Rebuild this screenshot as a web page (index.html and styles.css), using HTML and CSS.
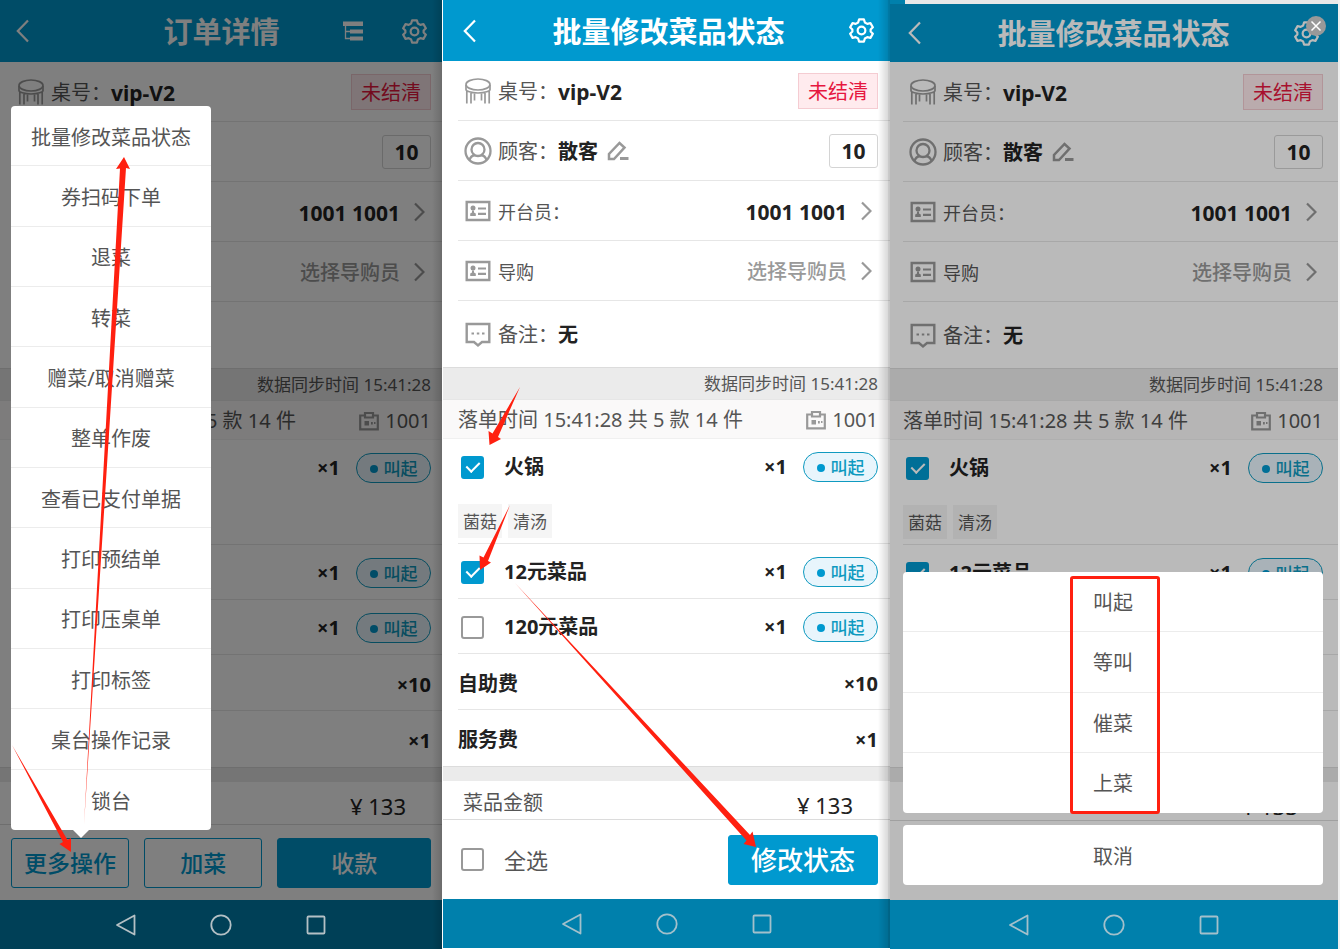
FILE: index.html
```html
<!DOCTYPE html>
<html lang="zh-CN">
<head>
    <meta charset="UTF-8">
    <meta name="viewport" content="width=device-width, initial-scale=1.0">
    <title>批量修改菜品状态</title>
    <link rel="stylesheet" href="styles.css">
</head>
<body>
    <!-- shared icons -->
    <svg class="sprite" aria-hidden="true">
        <symbol id="i-back" viewBox="0 0 13 24"><path d="M12 1.500 1.800 12 12 22.500" fill="none" stroke="currentColor" stroke-width="2.200"/></symbol>
        <symbol id="i-next" viewBox="0 0 11 20"><path d="M1 1.500l8.500 8.500L1 18.500" fill="none" stroke="currentColor" stroke-width="2.200"/></symbol>
        <symbol id="i-gear" viewBox="0 0 26 26">
            <path d="M10.500 1.500h5l1 3.200 2.500 1.400 3.300-.8 2.500 4.300-2.300 2.400v2l2.300 2.400-2.500 4.300-3.300-.8-2.500 1.400-1 3.200h-5l-1-3.200L7 19.900l-3.300.8-2.500-4.300L3.500 14v-2L1.200 9.600l2.500-4.300 3.300.8 2.500-1.400z" fill="none" stroke="currentColor" stroke-width="2.300" stroke-linejoin="round"/>
            <circle cx="13" cy="13" r="4" fill="none" stroke="currentColor" stroke-width="2.300"/>
        </symbol>
        <symbol id="i-tree" viewBox="0 0 20 20">
            <path d="M0 .5h20v4.500H0zM7 8.500h13v4H7zM7 15.500h13v4H7z" fill="currentColor"/>
            <path d="M2.500 5v12.500H7M2.500 10.500H7" fill="none" stroke="currentColor" stroke-width="1.300"/>
        </symbol>
        <symbol id="i-stool" viewBox="0 0 28 28">
            <g fill="none" stroke="currentColor" stroke-width="1.700">
                <ellipse cx="14" cy="7.500" rx="12" ry="5.500"/>
                <path d="M2 8v4.500c0 1.500 5 3.500 12 3.500s12-2 12-3.500V8M2.800 14v12.500M7 15.500v11M10.500 16v7.500M17.500 16v7.500M21 15.500v11M25.200 14v12.500"/>
            </g>
        </symbol>
        <symbol id="i-user" viewBox="0 0 28 28">
            <g fill="none" stroke="currentColor" stroke-width="2.300">
                <circle cx="14" cy="14" r="12.500"/>
                <circle cx="14" cy="12.500" r="6.500"/>
                <path d="M5.500 22.800c1-2.800 3-4.300 5.500-4.800M22.500 22.800c-1-2.800-3-4.300-5.500-4.800"/>
            </g>
        </symbol>
        <symbol id="i-card" viewBox="0 0 28 28">
            <path d="M2.700 5h22.600v18H2.700z" fill="none" stroke="currentColor" stroke-width="2.400"/>
            <circle cx="9" cy="11" r="2.500" fill="currentColor"/>
            <path d="M6.200 19v-2.500l1.800-1v-2h2v2l1.800 1V19z" fill="currentColor"/>
            <path d="M14 11.500h8M14 16.800h8" stroke="currentColor" stroke-width="2.200"/>
        </symbol>
        <symbol id="i-note" viewBox="0 0 28 28">
            <path d="M2.700 4h22.600v18H18l-4 3.500L10 22H2.700z" fill="none" stroke="currentColor" stroke-width="2.400"/>
            <path d="M7.500 13.500h2.500M12.800 13.500h2.500M18 13.500h2.500" stroke="currentColor" stroke-width="2.200"/>
        </symbol>
        <symbol id="i-edit" viewBox="0 0 22 20">
            <path d="M2 18v-5L12.500 2l5 4.500L7 18z" fill="none" stroke="currentColor" stroke-width="2.500"/>
            <path d="M13 17.500h8.500" stroke="currentColor" stroke-width="3"/>
        </symbol>
        <symbol id="i-badge" viewBox="0 0 20 20">
            <path d="M6 4.500H1.200v13.800h17.600V4.500H14" fill="none" stroke="currentColor" stroke-width="2.200"/>
            <path d="M6 2h8v4.500H6z" fill="none" stroke="currentColor" stroke-width="2.200"/>
            <path d="M5.500 10h4.500v4.500H5.500zM12 11h1.800v2.500H12zM15 11h1.500v2H15z" fill="currentColor"/>
        </symbol>
        <symbol id="i-tri" viewBox="0 0 22 22"><path d="M19.500 1.500v19L2 11z" fill="none" stroke="currentColor" stroke-width="1.800" stroke-linejoin="round"/></symbol>
        <symbol id="i-circle" viewBox="0 0 22 22"><circle cx="11" cy="11" r="9.700" fill="none" stroke="currentColor" stroke-width="1.800"/></symbol>
        <symbol id="i-square" viewBox="0 0 22 22"><rect x="2.500" y="2.500" width="17" height="17" rx="1" fill="none" stroke="currentColor" stroke-width="1.800"/></symbol>
    </svg>

    <main class="screens">
        <!-- order detail -->
        <section class="phone phone-detail">
            <header class="header">
                <button type="button" class="icon-btn" aria-label="返回"><svg class="back"><use href="#i-back"/></svg></button>
                <h1>订单详情</h1>
                <div class="tools">
                    <button type="button" class="icon-btn" aria-label="列表"><svg class="tree"><use href="#i-tree"/></svg></button>
                    <button type="button" class="icon-btn" aria-label="设置"><svg class="gear"><use href="#i-gear"/></svg></button>
                </div>
            </header>
            <div class="info">
                <div class="row"><svg class="ico"><use href="#i-stool"/></svg><span>桌号：</span><b class="num">vip-V2</b><span class="tag-red">未结清</span></div>
                <div class="row"><button type="button" class="count">10</button></div>
                <div class="row"><b class="num right">1001 1001</b><svg class="next"><use href="#i-next"/></svg></div>
                <div class="row"><span class="right hint">选择导购员</span><svg class="next"><use href="#i-next"/></svg></div>
                <div class="row remark"></div>
            </div>
            <div class="sync">数据同步时间 15:41:28</div>
            <div class="batch"><span>落单时间 15:41:28 共 5 款 14 件</span><span class="staff"><svg><use href="#i-badge"/></svg>1001</span></div>
            <ul class="items">
                <li class="with-tags"><div class="item"><span class="qty">×1</span><span class="pill">叫起</span></div></li>
                <li><div class="item"><span class="qty">×1</span><span class="pill">叫起</span></div></li>
                <li><div class="item"><span class="qty">×1</span><span class="pill">叫起</span></div></li>
                <li class="fee"><div class="item"><span class="qty">×10</span></div></li>
                <li class="fee"><div class="item"><span class="qty">×1</span></div></li>
            </ul>
            <div class="divider"></div>
            <div class="amount"><span class="money">¥ 133</span></div>
            <footer class="footer detail-footer">
                <button type="button" class="btn-line">更多操作</button>
                <button type="button" class="btn-line">加菜</button>
                <button type="button" class="btn-fill">收款</button>
            </footer>
            <nav class="nav">
                <button type="button" class="icon-btn" aria-label="后退"><svg><use href="#i-tri"/></svg></button>
                <button type="button" class="icon-btn" aria-label="主页"><svg><use href="#i-circle"/></svg></button>
                <button type="button" class="icon-btn" aria-label="最近"><svg><use href="#i-square"/></svg></button>
            </nav>
            <div class="mask"></div>
            <ul class="popup">
                <li><button type="button">批量修改菜品状态</button></li>
                <li><button type="button">券扫码下单</button></li>
                <li><button type="button">退菜</button></li>
                <li><button type="button">转菜</button></li>
                <li><button type="button">赠菜/取消赠菜</button></li>
                <li><button type="button">整单作废</button></li>
                <li><button type="button">查看已支付单据</button></li>
                <li><button type="button">打印预结单</button></li>
                <li><button type="button">打印压桌单</button></li>
                <li><button type="button">打印标签</button></li>
                <li><button type="button">桌台操作记录</button></li>
                <li><button type="button">锁台</button></li>
            </ul>
            <svg class="arrows" viewBox="0 0 442 949">
                <path d="M84 825 120 168.500l-4 .5L124 157l6 12-4-1z"/>
                <path d="M12 745 67.500 840l3.500-2v14l-11.500-8 3.500-2z"/>
            </svg>
        </section>

        <!-- pick the dishes -->
        <section class="phone phone-batch">
            <header class="header">
                <button type="button" class="icon-btn" aria-label="返回"><svg class="back"><use href="#i-back"/></svg></button>
                <h1>批量修改菜品状态</h1>
                <div class="tools">
                    <button type="button" class="icon-btn" aria-label="设置"><svg class="gear"><use href="#i-gear"/></svg></button>
                </div>
            </header>
            <div class="info">
                <div class="row"><svg class="ico"><use href="#i-stool"/></svg><span>桌号：</span><b class="num">vip-V2</b><span class="tag-red">未结清</span></div>
                <div class="row"><svg class="ico"><use href="#i-user"/></svg><span>顾客：</span><b>散客</b><svg class="edit"><use href="#i-edit"/></svg><button type="button" class="count">10</button></div>
                <div class="row"><svg class="ico"><use href="#i-card"/></svg><span class="small">开台员：</span><b class="num right">1001 1001</b><svg class="next"><use href="#i-next"/></svg></div>
                <div class="row"><svg class="ico"><use href="#i-card"/></svg><span class="small">导购</span><span class="right hint">选择导购员</span><svg class="next"><use href="#i-next"/></svg></div>
                <div class="row remark"><svg class="ico"><use href="#i-note"/></svg><span>备注：</span><b>无</b></div>
            </div>
            <div class="sync">数据同步时间 15:41:28</div>
            <div class="batch"><span>落单时间 15:41:28 共 5 款 14 件</span><span class="staff"><svg><use href="#i-badge"/></svg>1001</span></div>
            <ul class="items">
                <li class="with-tags">
                    <div class="item"><label class="check"><input type="checkbox" checked>火锅</label><span class="qty">×1</span><span class="pill">叫起</span></div>
                    <div class="tags"><span>菌菇</span><span>清汤</span></div>
                </li>
                <li><div class="item"><label class="check"><input type="checkbox" checked>12元菜品</label><span class="qty">×1</span><span class="pill">叫起</span></div></li>
                <li><div class="item"><label class="check"><input type="checkbox">120元菜品</label><span class="qty">×1</span><span class="pill">叫起</span></div></li>
                <li class="fee"><div class="item"><span>自助费</span><span class="qty">×10</span></div></li>
                <li class="fee"><div class="item"><span>服务费</span><span class="qty">×1</span></div></li>
            </ul>
            <div class="divider"></div>
            <div class="amount"><span>菜品金额</span><span class="money">¥ 133</span></div>
            <footer class="footer batch-footer">
                <label class="check all"><input type="checkbox">全选</label>
                <button type="button" class="btn-fill">修改状态</button>
            </footer>
            <nav class="nav">
                <button type="button" class="icon-btn" aria-label="后退"><svg><use href="#i-tri"/></svg></button>
                <button type="button" class="icon-btn" aria-label="主页"><svg><use href="#i-circle"/></svg></button>
                <button type="button" class="icon-btn" aria-label="最近"><svg><use href="#i-square"/></svg></button>
            </nav>
            <svg class="arrows" viewBox="0 0 447 949">
                <path d="M77 387 55 437l3 2-11.500 6-1-14 4 2.500z"/>
                <path d="M67 505 45 561l3 1.500L37 570l-.5-14.500 4 2z"/>
                <path d="M72 583 307 835l2.500-3.500L313 847l-12.500-3 3-3.500z"/>
            </svg>
        </section>

        <!-- choose the new status -->
        <section class="phone phone-sheet">
            <header class="header">
                <button type="button" class="icon-btn" aria-label="返回"><svg class="back"><use href="#i-back"/></svg></button>
                <h1>批量修改菜品状态</h1>
                <div class="tools">
                    <button type="button" class="icon-btn" aria-label="设置"><svg class="gear"><use href="#i-gear"/></svg></button>
                </div>
            </header>
            <div class="info">
                <div class="row"><svg class="ico"><use href="#i-stool"/></svg><span>桌号：</span><b class="num">vip-V2</b><span class="tag-red">未结清</span></div>
                <div class="row"><svg class="ico"><use href="#i-user"/></svg><span>顾客：</span><b>散客</b><svg class="edit"><use href="#i-edit"/></svg><button type="button" class="count">10</button></div>
                <div class="row"><svg class="ico"><use href="#i-card"/></svg><span class="small">开台员：</span><b class="num right">1001 1001</b><svg class="next"><use href="#i-next"/></svg></div>
                <div class="row"><svg class="ico"><use href="#i-card"/></svg><span class="small">导购</span><span class="right hint">选择导购员</span><svg class="next"><use href="#i-next"/></svg></div>
                <div class="row remark"><svg class="ico"><use href="#i-note"/></svg><span>备注：</span><b>无</b></div>
            </div>
            <div class="sync">数据同步时间 15:41:28</div>
            <div class="batch"><span>落单时间 15:41:28 共 5 款 14 件</span><span class="staff"><svg><use href="#i-badge"/></svg>1001</span></div>
            <ul class="items">
                <li class="with-tags">
                    <div class="item"><label class="check"><input type="checkbox" checked>火锅</label><span class="qty">×1</span><span class="pill">叫起</span></div>
                    <div class="tags"><span>菌菇</span><span>清汤</span></div>
                </li>
                <li><div class="item"><label class="check"><input type="checkbox" checked>12元菜品</label><span class="qty">×1</span><span class="pill">叫起</span></div></li>
                <li></li>
                <li class="fee"></li>
                <li class="fee"></li>
            </ul>
            <div class="divider"></div>
            <div class="amount"><span class="money">¥ 133</span></div>
            <footer class="footer batch-footer"></footer>
            <nav class="nav">
                <button type="button" class="icon-btn" aria-label="后退"><svg><use href="#i-tri"/></svg></button>
                <button type="button" class="icon-btn" aria-label="主页"><svg><use href="#i-circle"/></svg></button>
                <button type="button" class="icon-btn" aria-label="最近"><svg><use href="#i-square"/></svg></button>
            </nav>
            <div class="mask"></div>
            <div class="sheet">
                <ul>
                    <li><button type="button">叫起</button></li>
                    <li><button type="button">等叫</button></li>
                    <li><button type="button">催菜</button></li>
                    <li><button type="button">上菜</button></li>
                </ul>
                <button type="button" class="cancel">取消</button>
                <div class="frame"></div>
            </div>
            <button type="button" class="icon-btn close" aria-label="关闭"><svg viewBox="0 0 20 20"><path d="M5.500 5.500l9 9M14.500 5.500l-9 9" stroke="#fff" stroke-width="1.500"/></svg></button>
        </section>
    </main>
</body>
</html>
```

FILE: styles.css
```css
* {
    box-sizing: border-box;
}
body {
    margin: 0;
    background: #f0f0f0;
    color: #555;
    font-family: "Noto Sans", "Noto Sans CJK SC", sans-serif;
    font-size: 20px;
    line-height: 28px;
}
ul {
    list-style: none;
    margin: 0;
    padding: 0;
}
button {
    font: inherit;
    color: inherit;
    background: none;
    border: none;
    padding: 0;
    cursor: pointer;
}
svg {
    display: block;
    flex: none;
}
b {
    color: #222;
}
.sprite {
    position: absolute;
    width: 0;
    height: 0;
}
.screens {
    display: grid;
    grid-template-columns: 442fr 448fr 448fr;
    min-height: 100vh;
    padding-right: 2px;
}
.phone {
    --left: 15px;
    --right: 12px;
    position: relative;
    display: flex;
    flex-direction: column;
    min-width: 0;
    background: #fff;
    overflow: hidden;
}
.phone-detail {
    --left: 11px;
    --right: 11px;
}
.phone-batch {
    border-left: 1px solid #fff;
    border-bottom: 1px solid #fff;
}
.phone-sheet {
    --left: 13px;
    --right: 15px;
    padding-top: 4px;
    background: linear-gradient(90deg, #0080ac 15px, #e8e8e8 15px);
}

/* soft edge between the screens */
.phone-detail::after,
.phone-batch::after {
    content: "";
    position: absolute;
    top: 0;
    right: 0;
    bottom: 0;
    width: 10px;
    background: linear-gradient(90deg, transparent, rgba(0, 0, 0, 0.15));
}
.phone-batch::after {
    border-right: 2px solid rgba(0, 0, 0, 0.2);
}

/* header */
.header {
    display: grid;
    grid-template-columns: 1fr auto 1fr;
    align-items: center;
    height: 61px;
    padding: 0 calc(var(--right) + 4px) 0 calc(var(--left) + 5px);
    background: #0099cf;
    color: #fff;
}
.phone-detail .header {
    height: 62px;
}
.phone-sheet .header {
    height: 58px;
}
.header h1 {
    margin: 0;
    padding-top: 2px;
    font-size: 29px;
    line-height: 40px;
}
.tools {
    display: flex;
    justify-content: flex-end;
    align-items: center;
    gap: 39px;
}
.icon-btn {
    display: block;
}
.back {
    width: 13px;
    height: 24px;
}
.tree {
    width: 20px;
    height: 20px;
}
.gear {
    width: 25px;
    height: 25px;
}

/* table info */
.info,
.items,
.amount,
.footer {
    background: #fff;
}
.row {
    display: flex;
    align-items: center;
    height: 60px;
    margin-left: var(--left);
    padding: 0 var(--right) 0 6px;
    border-bottom: 1px solid #e6e6e6;
}
.row span,
.row b {
    padding-top: 2px;
}
.row.remark {
    height: 66px;
    border-bottom: none;
}
.ico {
    width: 28px;
    height: 28px;
    margin-right: 6px;
    color: #999;
}
.small {
    font-size: 18px;
}
.num {
    font-size: 21px;
}
.edit {
    width: 22px;
    height: 20px;
    margin-left: 9px;
    color: #999;
}
.right {
    margin-left: auto;
}
.hint {
    color: #999;
    font-weight: 500;
}
.next {
    width: 11px;
    height: 20px;
    margin: 0 6px 0 14px;
    color: #999;
}
.row .tag-red {
    margin-left: auto;
    padding: 4px 9px 2px;
    border: 1px solid #f5ccd2;
    background: #ffebee;
    color: #e6173f;
}
.count {
    width: 49px;
    height: 34px;
    margin-left: auto;
    padding-top: 1px;
    border: 1px solid #d4d4d4;
    border-radius: 3px;
    color: #222;
    font-size: 21px;
    font-weight: bold;
}
.sync {
    height: 32px;
    padding-right: var(--right);
    border-top: 1px solid #dcdcdc;
    background: #ebebeb;
    font-size: 17px;
    line-height: 31px;
    text-align: right;
}
.batch {
    display: flex;
    justify-content: space-between;
    align-items: center;
    height: 40px;
    padding: 2px var(--right) 0 var(--left);
    border-top: 1px solid #e6e6e6;
    border-bottom: 1px solid #f0f0f0;
    background: #faf9f9;
    white-space: nowrap;
}
.staff {
    display: flex;
    align-items: center;
    gap: 6px;
}
.staff svg {
    width: 20px;
    height: 20px;
    color: #999;
}

/* dishes */
.items li {
    height: 55px;
    margin-left: var(--left);
    padding-right: var(--right);
    border-bottom: 1px solid #e6e6e6;
}
.items li:last-child {
    border-bottom: none;
}
.items li.with-tags {
    height: 105px;
}
.items li.fee {
    height: 56px;
}
.item {
    display: flex;
    align-items: center;
    height: 55px;
    padding-top: 1px;
    color: #222;
    font-weight: bold;
}
.fee .item {
    padding-top: 4px;
}
.check {
    display: flex;
    align-items: center;
    gap: 20px;
    padding-left: 3px;
}
.check input {
    appearance: none;
    display: grid;
    place-items: center;
    width: 23px;
    height: 23px;
    margin: 0;
    border: 2px solid #999;
    border-radius: 3px;
    background: #fff;
}
.check input:checked {
    border-color: #0099cf;
    background: #0099cf;
}
.check input:checked::before {
    content: "";
    width: 6px;
    height: 11px;
    margin-bottom: 3px;
    border: solid #fff;
    border-width: 0 2px 2px 0;
    transform: rotate(45deg);
}
.qty {
    margin-left: auto;
}
.pill {
    display: flex;
    align-items: center;
    justify-content: center;
    gap: 6px;
    width: 75px;
    height: 30px;
    margin-left: 16px;
    padding-top: 1px;
    border: 1px solid #0f9ac0;
    border-radius: 15px;
    background: #e8f5fc;
    color: #0f9ac0;
    font-size: 17px;
    font-weight: 500;
}
.pill::before {
    content: "";
    width: 8px;
    height: 8px;
    border-radius: 50%;
    background: #0099cf;
}
.tags {
    display: flex;
    gap: 6px;
    margin-top: 10px;
    font-size: 17px;
}
.tags span {
    padding: 4px 5px 2px;
    background: #f5f5f5;
}
.divider {
    height: 15px;
    border-top: 1px solid #dcdcdc;
    background: #ebebeb;
}
.amount {
    display: flex;
    flex: 1 0 38px;
    justify-content: space-between;
    height: 38px;
    padding: 8px calc(var(--right) + 25px) 0 calc(var(--left) + 5px);
    overflow: hidden;
}
.money {
    margin-left: auto;
    color: #222;
    font-size: 22px;
    line-height: 32px;
}

/* footer */
.footer {
    display: flex;
    align-items: center;
    border-top: 1px solid #dcdcdc;
    padding: 0 var(--right) 0 var(--left);
}
.detail-footer {
    gap: 15px;
    height: 76px;
    font-size: 23px;
    font-weight: 500;
}
.batch-footer {
    justify-content: space-between;
    height: 80px;
}
.btn-line {
    flex: 118;
    height: 50px;
    border: 1px solid #0099cf;
    border-radius: 3px;
    color: #0099cf;
}
.btn-fill {
    height: 50px;
    border: 1px solid #0099cf;
    border-radius: 3px;
    background: #0099cf;
    color: #fff;
}
.detail-footer .btn-fill {
    flex: 154;
}
.batch-footer .btn-fill {
    width: 150px;
    font-size: 26px;
    font-weight: 500;
}
.all {
    font-size: 22px;
}
.nav {
    display: flex;
    justify-content: center;
    align-items: center;
    gap: 73px;
    height: 49px;
    background: #0080ac;
    color: #a3c0cb;
}
.nav svg {
    width: 22px;
    height: 22px;
}
.phone-detail .nav {
    background: #004057;
    color: #b4c0c5;
}

/* layers over the screens */
.mask {
    position: absolute;
    top: 0;
    right: 0;
    bottom: 49px;
    left: 0;
    background: rgba(0, 0, 0, 0.5);
}
.phone-sheet .mask {
    top: 4px;
    background: rgba(0, 0, 0, 0.27);
}
.popup {
    position: absolute;
    top: 106px;
    left: 11px;
    display: grid;
    grid-auto-rows: 1fr;
    width: 200px;
    height: 724px;
    border-radius: 4px;
    background: #fff;
}
.popup::after {
    content: "";
    position: absolute;
    left: 62px;
    bottom: -8px;
    border: solid transparent;
    border-width: 8px 8px 0;
    border-top-color: #fff;
}
.popup li,
.sheet li {
    display: grid;
    border-bottom: 1px solid #ececec;
}
.popup button {
    padding-top: 4px;
}
.sheet button {
    padding-top: 3px;
}
.popup li:last-child,
.sheet li:last-child {
    border-bottom: none;
}
.sheet {
    position: absolute;
    right: 15px;
    bottom: 64px;
    left: 13px;
}
.sheet ul {
    display: grid;
    grid-auto-rows: 1fr;
    height: 241px;
    border-radius: 4px;
    background: #fff;
}
.cancel {
    display: block;
    width: 100%;
    height: 60px;
    margin-top: 12px;
    border-radius: 4px;
    background: #fff;
}
.frame {
    position: absolute;
    top: 4px;
    left: calc(50% - 43px);
    width: 90px;
    height: 238px;
    border: 3px solid #ff2010;
    border-radius: 3px;
    pointer-events: none;
}
.close {
    position: absolute;
    top: 16px;
    right: 12px;
    width: 20px;
    height: 20px;
    border-radius: 50%;
    background: #999;
}
.arrows {
    position: absolute;
    top: 0;
    left: 0;
    width: 442px;
    height: 949px;
    fill: #ff2010;
    pointer-events: none;
}
.phone-batch .arrows {
    width: 447px;
}
```
